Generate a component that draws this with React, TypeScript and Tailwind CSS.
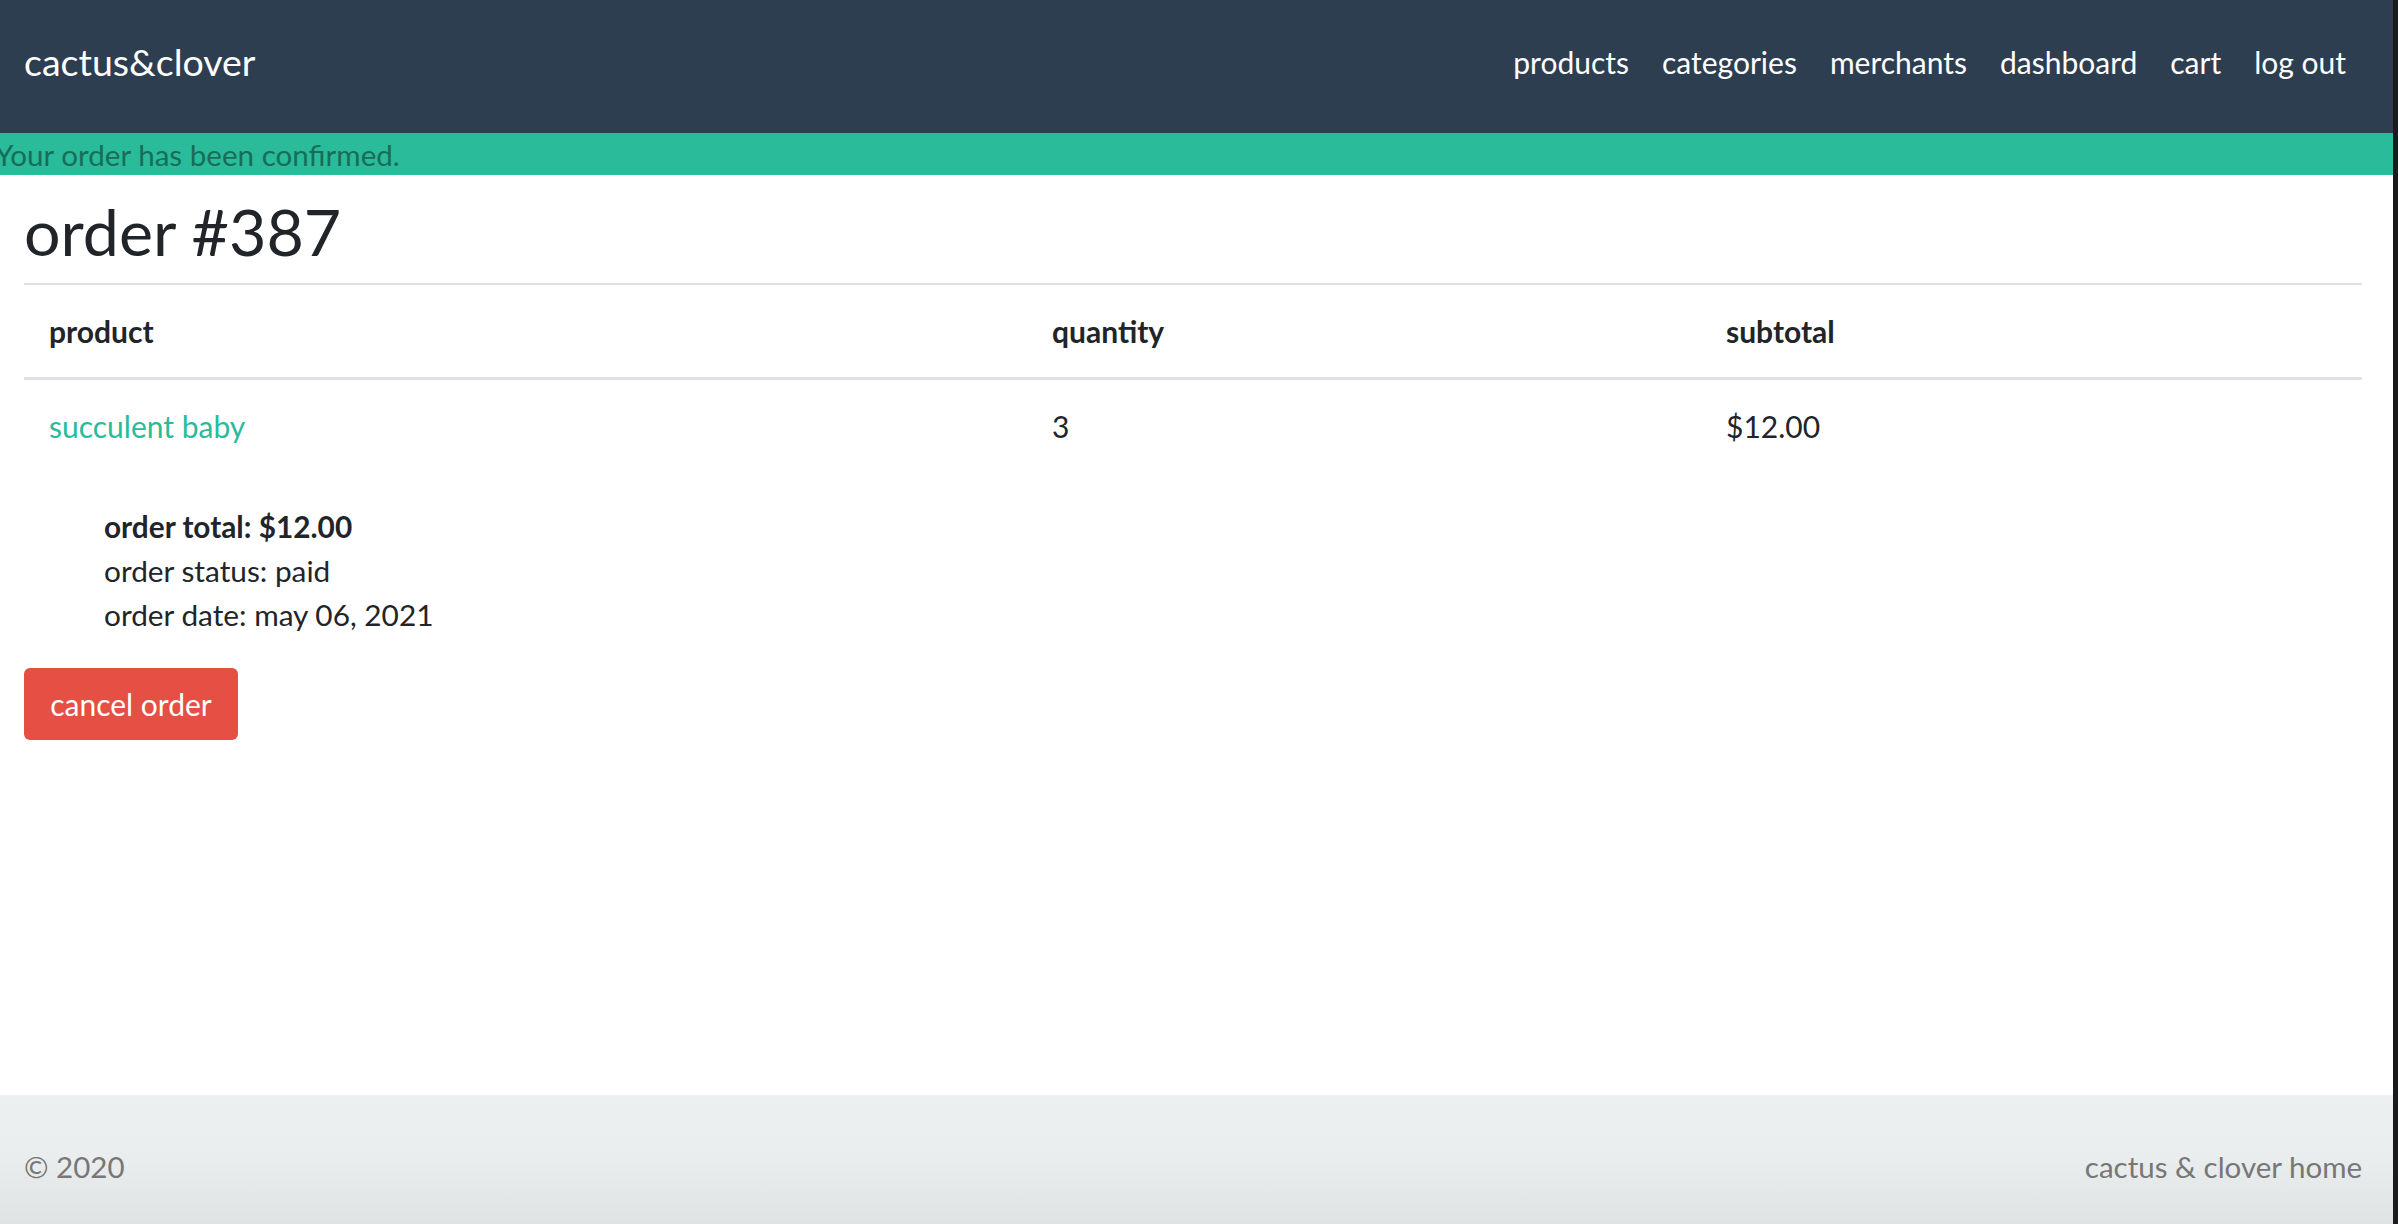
import React from 'react';

const navLinks = ['products', 'categories', 'merchants', 'dashboard', 'cart', 'log out'];

const lineItems = [{ name: 'succulent baby', quantity: 3, subtotal: '$12.00' }];

export default function App() {
  return (
    <div className="flex w-full h-[1224px] overflow-hidden font-[Lato,sans-serif] text-[#212529]">
      <div className="flex flex-1 flex-col min-w-0">
        {/* navbar */}
        <nav className="flex h-[133px] shrink-0 items-center justify-between bg-[#2e3e51] pl-[24px] pr-[47px] pb-[10px] text-white">
          <a className="text-[37.5px] leading-none">cactus&amp;clover</a>
          <ul className="flex items-center gap-[33px] text-[30px] leading-none">
            {navLinks.map((link) => (
              <li key={link}>
                <a>{link}</a>
              </li>
            ))}
          </ul>
        </nav>

        {/* flash */}
        <div className="flex h-[42px] shrink-0 items-center overflow-hidden bg-[#2abb9b] text-[29.6px] leading-none text-[#176e58]">
          <span className="-ml-[5px] pt-[2px] whitespace-nowrap">Your order has been confirmed.</span>
        </div>

        {/* order */}
        <main className="px-[24px] pr-[31px]">
          <h1 className="mt-[20px] mb-[16px] h-[72px] text-[64.5px] leading-[72px]">order #387</h1>
          <div className="border-t-2 border-[#dee2e6]">
            <div className="grid h-[95px] grid-cols-[1010px_674px_1fr] items-center border-b-[3px] border-[#dee2e6] text-[30px] font-bold">
              <div className="pl-[25px]">product</div>
              <div className="pl-[18px]">quantity</div>
              <div className="pl-[18px]">subtotal</div>
            </div>
            {lineItems.map((item) => (
              <div
                key={item.name}
                className="grid h-[92px] grid-cols-[1010px_674px_1fr] items-center text-[30px]"
              >
                <a className="pl-[25px] text-[#2abb9b]">{item.name}</a>
                <div className="pl-[18px]">{item.quantity}</div>
                <div className="pl-[18px]">{item.subtotal}</div>
              </div>
            ))}
          </div>

          <ul className="mt-[33px] pl-[80px] text-[29.8px] leading-[44px]">
            <li className="font-bold">order total: $12.00</li>
            <li>order status: paid</li>
            <li>order date: may 06, 2021</li>
          </ul>

          <button className="mt-[31px] flex h-[72px] w-[214px] items-center justify-center rounded-[6px] bg-[#e54f44] text-[30px] text-white">
            cancel order
          </button>
        </main>

        <div className="flex-1" />

        {/* footer */}
        <footer className="flex h-[129px] shrink-0 items-center justify-between bg-linear-to-b from-[#ecf0f1] via-[#e9edee] to-[#dfe3e4] px-[24px] pt-[16px] pr-[31px] text-[29.5px] text-[#777777]">
          <span>© 2020</span>
          <a>cactus &amp; clover home</a>
        </footer>
      </div>
      <div className="w-[5px] shrink-0 bg-[#1b1b1d]" />
    </div>
  );
}
